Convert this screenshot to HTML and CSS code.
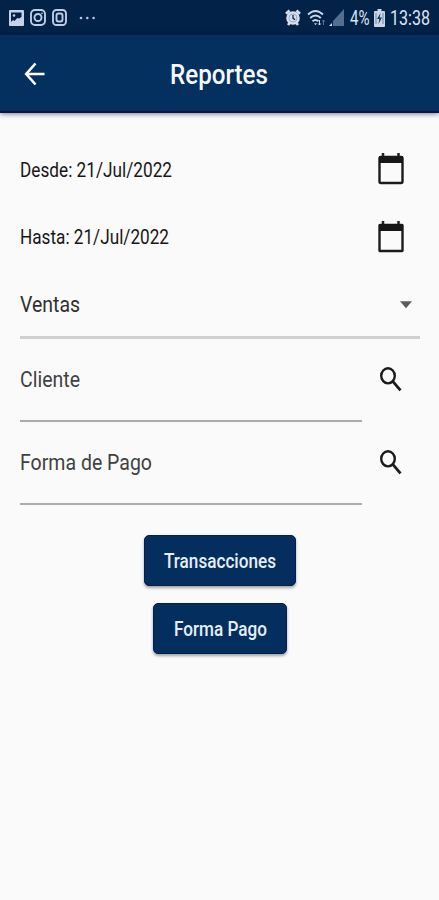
FILE: index.html
```html
<!DOCTYPE html>
<html lang="es">
<head>
<meta charset="utf-8">
<meta name="viewport" content="width=device-width">
<title>Reportes</title>
<link rel="stylesheet" href="styles.css">
</head>
<body>
<div class="status">
  <div class="status-left">
    <svg width="15" height="16" viewBox="0 0 15 16"><rect width="15" height="16" rx="1" fill="#c5d3ea"/><path d="M2 2.500h10.500v4.500L10 8.500 8.300 8 5.500 11 4 10 2 12z" fill="#062149"/><circle cx="5" cy="5.500" r="1.300" fill="#c5d3ea"/></svg>
    <svg width="16" height="17" viewBox="0 0 16 17" fill="none" stroke="#bdcde6" stroke-width="1.900"><rect x="1" y="1" width="14" height="15" rx="4"/><circle cx="8" cy="8.500" r="3.500"/><circle cx="12" cy="4.300" r=".5" stroke-width="1"/></svg>
    <svg width="15" height="17" viewBox="0 0 15 17" fill="none" stroke="#bdcde6" stroke-width="1.900"><rect x="1" y="1" width="13" height="15" rx="3.500"/><rect x="4.500" y="4.500" width="6" height="8" rx="2"/></svg>
    <svg class="dots" width="17" height="4" viewBox="0 0 17 4" fill="#b5c7e2"><circle cx="2" cy="2" r="1.300"/><circle cx="8.300" cy="2" r="1.300"/><circle cx="14.600" cy="2" r="1.300"/></svg>
  </div>
  <div class="status-right">
    <svg width="16" height="17" viewBox="0 0 16 17"><circle cx="8" cy="9" r="6.800" fill="#d6deeb"/><path d="M1 4.800 4.500 1.500M15 4.800 11.500 1.500M3 16l2-2.500M13 16l-2-2.500" stroke="#d6deeb" stroke-width="2.600"/><circle cx="8" cy="9" r="4" fill="none" stroke="#9dabc1" stroke-width="1"/><path d="M8 6v3.300l2 1.300" fill="none" stroke="#0a2854" stroke-width="1.300"/></svg>
    <svg class="wifi" width="19" height="18" viewBox="0 0 19 18" fill="none" stroke="#cbd7e8" stroke-width="1.900"><path d="M1 5.500Q8.500-1.500 16 5.500M3.200 9q5.300-4.800 10.600 0M5.500 12.200q3-2.500 6 0"/><path d="M7 14.200h3l-1.500 2z" fill="#cbd7e8" stroke="none"/><path d="M12.500 11v5m-1.300-1.500 1.300 1.500 1.300-1.500" stroke-width="1"/><path d="M16.500 16v-5m-1.200 1.500 1.200-1.500 1.200 1.500" stroke="#5d779a" stroke-width="1"/></svg>
    <svg class="signal" width="15" height="17" viewBox="0 0 15 17"><path d="M15 0v17H4v-5z" fill="#526e91"/><path d="M0 17h3v-3z" fill="#d6deeb"/></svg>
    <svg class="pct" width="20" height="20"><text x="0" y="17" textLength="19.500" lengthAdjust="spacingAndGlyphs">4%</text></svg>
    <svg class="battery" width="11" height="18" viewBox="0 0 11 18"><path d="M3.500 0h4v2H10q1 0 1 1v14q0 1-1 1H1q-1 0-1-1V3q0-1 1-1h2.500z" fill="#cbd5e5"/><path d="M6.500 4 3 10h2.300L4.500 15 8 8.500H5.700z" fill="#173860"/><path d="M2 4v11M9 4v11" stroke="#71849f"/></svg>
    <svg class="clock" width="41" height="20"><text x="0" y="17" textLength="40" lengthAdjust="spacingAndGlyphs">13:38</text></svg>
  </div>
</div>
<header class="bar">
  <svg class="back" width="22" height="24" viewBox="0 0 22 24" fill="none" stroke="#fff" stroke-width="2.600"><path d="M20.500 12H2.500M11.500 1.500 2.200 12l9.300 10.500"/></svg>
  <svg class="title" width="100" height="32"><text x="0" y="26.500" textLength="98" lengthAdjust="spacingAndGlyphs">Reportes</text></svg>
</header>
<main class="form">
  <div class="row date">
    <svg class="label" width="154" height="26"><text x="0" y="19.500" textLength="152" lengthAdjust="spacingAndGlyphs">Desde: 21/Jul/2022</text></svg>
    <svg class="cal" width="26" height="33" viewBox="0 0 26 33"><path d="M5 1v4M20.500 1v4" stroke="#222" stroke-width="2.500"/><rect x="1.500" y="5" width="23" height="26" rx="1.500" fill="none" stroke="#1b1b1b" stroke-width="2.400"/><path d="M1 4h24v7H1z" fill="#171717"/></svg>
  </div>
  <div class="row date">
    <svg class="label" width="151" height="26"><text x="0" y="20" textLength="149" lengthAdjust="spacingAndGlyphs">Hasta: 21/Jul/2022</text></svg>
    <svg class="cal" width="26" height="33" viewBox="0 0 26 33"><path d="M5 1v4M20.500 1v4" stroke="#222" stroke-width="2.500"/><rect x="1.500" y="5" width="23" height="26" rx=".5" fill="none" stroke="#1b1b1b" stroke-width="2.400"/><path d="M1 4h24v7H1z" fill="#171717"/></svg>
  </div>
  <div class="row select">
    <svg class="label big" width="62" height="28"><text x="0" y="22" textLength="60" lengthAdjust="spacingAndGlyphs">Ventas</text></svg>
    <svg class="caret" width="12" height="8" viewBox="0 0 12 8"><path d="M0 1.200h12L6 8.200z" fill="#5b5b5b"/></svg>
  </div>
  <div class="row search">
    <div class="field"><svg class="label big soft" width="62" height="28"><text x="0" y="21" textLength="60" lengthAdjust="spacingAndGlyphs">Cliente</text></svg></div>
    <svg class="lens" width="22" height="25" viewBox="0 0 22 25" fill="none" stroke="#1b1b1b" stroke-width="2.400"><ellipse cx="8" cy="8.800" rx="6.800" ry="7.600"/><path d="m12.800 14.300 7.700 9" stroke-width="2.800"/></svg>
  </div>
  <div class="row search">
    <div class="field"><svg class="label big soft" width="134" height="28"><text x="0" y="21" textLength="132" lengthAdjust="spacingAndGlyphs">Forma de Pago</text></svg></div>
    <svg class="lens" width="22" height="25" viewBox="0 0 22 25" fill="none" stroke="#1b1b1b" stroke-width="2.400"><ellipse cx="8" cy="8.800" rx="6.800" ry="7.600"/><path d="m12.800 14.300 7.700 9" stroke-width="2.800"/></svg>
  </div>
  <div class="actions">
    <button class="btn wide"><svg width="112" height="26"><text x="0" y="20" textLength="112" lengthAdjust="spacingAndGlyphs">Transacciones</text></svg></button>
    <button class="btn"><svg width="93" height="26"><text x="0" y="20" textLength="93" lengthAdjust="spacingAndGlyphs">Forma Pago</text></svg></button>
  </div>
</main>
</body>
</html>
```
FILE: styles.css
```css
* { box-sizing: border-box; }
html, body { height: 100%; }
body { margin: 0; background: #fafafa; font-family: Roboto, sans-serif; overflow: hidden; }
svg { display: block; flex: none; overflow: visible; }

.status { height: 35px; background: #022248; display: flex; justify-content: space-between; padding: 0 8px 0 9px; }
.status-left, .status-right { display: flex; align-items: center; }
.status-left { gap: 6px; }
.dots { margin-left: 6px; }
.status-right { font-size: 20px; fill: #dce5f2; }
.wifi { margin-left: 6px; }
.signal { margin-left: 3px; }
.pct { margin-left: 6px; }
.battery { margin-left: 4px; }
.clock { margin-left: 5px; }

.bar { height: 78px; background: #03305f; border-bottom: 2px solid #07164a; box-shadow: 0 1px 5px rgba(0, 0, 0, .5); display: grid; grid-template-columns: 170px 1fr; align-items: center; position: relative; }
.back { margin: 1px 0 0 24px; }
.title { font-size: 27px; font-weight: 500; fill: #f5f8fd; }

.form { padding: 23px 19px 0 20px; }
.row { display: flex; align-items: center; justify-content: space-between; }
.date { height: 67.500px; padding-right: 16px; }
.cal { margin-bottom: 2px; }
.label { font-size: 20px; fill: #171717; }
.big { font-size: 22px; fill: #303030; }
.soft { fill: #414141; }
.select { height: 68px; border-bottom: 3px solid #d0d0d0; padding-right: 8px; }
.search { height: 83px; padding-right: 18px; }
.field { width: 342px; height: 100%; border-bottom: 2px solid #acacac; display: flex; align-items: center; }
.lens { margin-bottom: 2px; }

.actions { display: flex; flex-direction: column; align-items: center; gap: 17px; padding-top: 30px; }
.btn { width: 134px; height: 51px; border: 1px solid #02204e; border-radius: 5px; background: #032e5d; box-shadow: 0 2px 3px rgba(0, 0, 0, .35); display: flex; align-items: center; justify-content: center; padding: 0; font: 500 20px Roboto, sans-serif; fill: #e6eef9; }
.wide { width: 152px; }
```
